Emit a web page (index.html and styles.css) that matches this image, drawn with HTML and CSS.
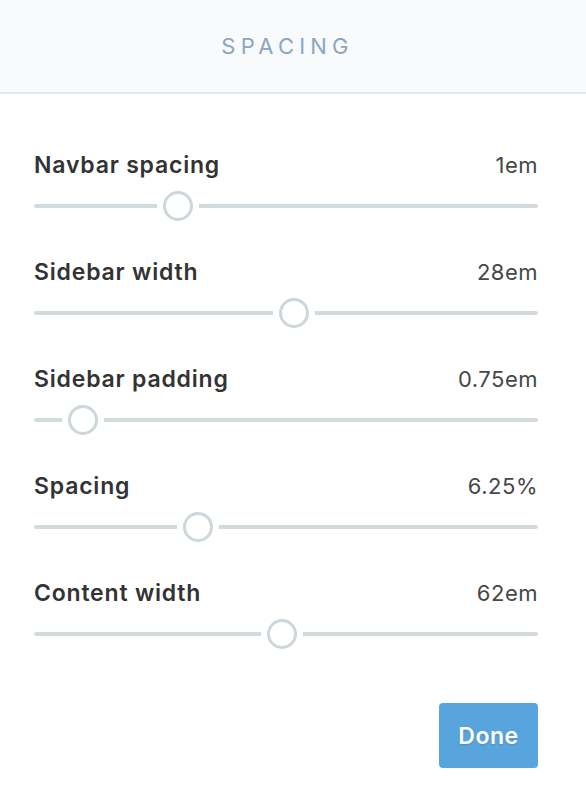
FILE: index.html
```html
<!DOCTYPE html>
<html lang="en">
<head>
  <meta charset="UTF-8" />
  <meta name="viewport" content="width=device-width, initial-scale=1.0"/>
  <title>Spacing</title>
  <link rel="stylesheet" href="styles.css">
</head>
<body>
  <header class="panel-header">
    <h1>Spacing</h1>
  </header>

  <form class="panel-body" id="spacingForm">
    <label class="setting">
      <span class="setting-head">
        <span class="setting-name">Navbar spacing</span>
        <span class="setting-value">1em</span>
      </span>
      <input type="range" name="navbar" min="0" max="1000" value="272" />
    </label>

    <label class="setting">
      <span class="setting-head">
        <span class="setting-name">Sidebar width</span>
        <span class="setting-value">28em</span>
      </span>
      <input type="range" name="sidebar-width" min="0" max="1000" value="517" />
    </label>

    <label class="setting">
      <span class="setting-head">
        <span class="setting-name">Sidebar padding</span>
        <span class="setting-value">0.75em</span>
      </span>
      <input type="range" name="sidebar-padding" min="0" max="1000" value="72" />
    </label>

    <label class="setting">
      <span class="setting-head">
        <span class="setting-name">Spacing</span>
        <span class="setting-value">6.25%</span>
      </span>
      <input type="range" name="spacing" min="0" max="1000" value="314" />
    </label>

    <label class="setting">
      <span class="setting-head">
        <span class="setting-name">Content width</span>
        <span class="setting-value">62em</span>
      </span>
      <input type="range" name="content-width" min="0" max="1000" value="492" />
    </label>

    <div class="actions">
      <button type="submit">Done</button>
    </div>
  </form>
</body>
</html>
```

FILE: styles.css
```css
body {
  margin: 0;
  font-family: Inter, "Liberation Sans", sans-serif;
  color: #333;
  background: #fff;
}

.panel-header {
  height: 92px;
  display: flex;
  align-items: center;
  justify-content: center;
  background: #f8fafc;
  border-bottom: 2px solid #e6e9ec;
}

.panel-header h1 {
  margin: 0 11px 0 0;
  font-size: 22px;
  font-weight: 400;
  letter-spacing: 5.2px;
  text-transform: uppercase;
  color: #8ba6c1;
}

.panel-body {
  display: flex;
  flex-direction: column;
  gap: 38px;
  padding: 58px 48px 0 34px;
}

.setting {
  display: flex;
  flex-direction: column;
  gap: 13px;
}

.setting-head {
  display: flex;
  justify-content: space-between;
  align-items: baseline;
  height: 26px;
  line-height: 26px;
}

.setting-name {
  font-size: 23px;
  font-weight: 600;
  letter-spacing: 0.8px;
  color: #333;
}

.setting-value {
  font-size: 22px;
  letter-spacing: 0.5px;
  color: #474747;
}

input[type="range"] {
  -webkit-appearance: none;
  appearance: none;
  width: 100%;
  height: 30px;
  margin: 0;
  background: transparent;
}

input[type="range"]::-webkit-slider-runnable-track {
  height: 4px;
  border-radius: 2px;
  background: #d2dade;
}

input[type="range"]::-webkit-slider-thumb {
  -webkit-appearance: none;
  width: 30px;
  height: 30px;
  margin-top: -13px;
  box-sizing: border-box;
  border: 3px solid #cdd6db;
  border-radius: 50%;
  background: #fff;
  box-shadow: 0 0 0 6px #fff;
}

.actions {
  display: flex;
  justify-content: flex-end;
  margin-top: 16px;
}

button {
  width: 99px;
  height: 65px;
  font-family: inherit;
  font-size: 23px;
  font-weight: 600;
  letter-spacing: 0.5px;
  color: #fff;
  text-shadow: 0 1px 2px rgba(0, 0, 0, 0.15);
  background-color: #58a5de;
  border: none;
  border-radius: 4px;
  cursor: pointer;
}

button:hover {
  background-color: #4795d0;
}
```
